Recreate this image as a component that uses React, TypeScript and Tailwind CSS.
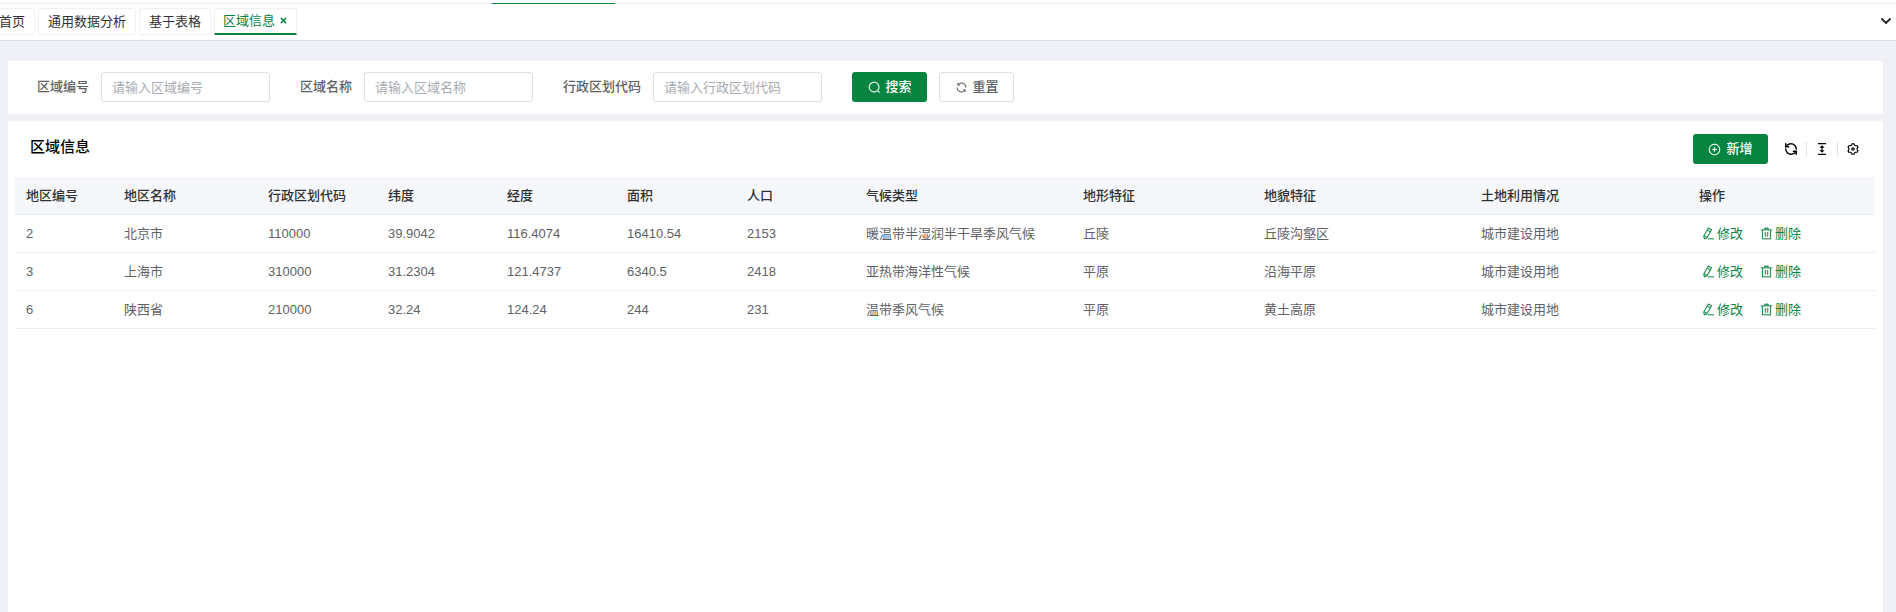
import { ChevronDown, RefreshCcw, X } from "lucide-react";
import { RiSettings3Line } from "react-icons/ri";

const PATHS = {
  search: [
    "m795.904 750.72 124.992 124.928a32 32 0 0 1-45.248 45.248L750.656 795.904a416 416 0 1 1 45.248-45.248zM480 832a352 352 0 1 0 0-704 352 352 0 0 0 0 704",
  ],
  refresh: [
    "M771.776 794.88A384 384 0 0 1 128 512h64a320 320 0 0 0 555.712 216.448H654.72a32 32 0 1 1 0-64h149.056a32 32 0 0 1 32 32v148.928a32 32 0 1 1-64 0v-50.56zM276.288 295.616h92.992a32 32 0 0 1 0 64H220.16a32 32 0 0 1-32-32V178.56a32 32 0 0 1 64 0v50.56A384 384 0 0 1 896.128 512h-64a320 320 0 0 0-555.776-216.384z",
  ],
  plus: [
    "M352 480h320a32 32 0 1 1 0 64H352a32 32 0 0 1 0-64",
    "M480 672V352a32 32 0 1 1 64 0v320a32 32 0 0 1-64 0",
    "M512 896a384 384 0 1 0 0-768 384 384 0 0 0 0 768m0 64a448 448 0 1 1 0-896 448 448 0 0 1 0 896",
  ],
  remove: [
    "M160 256H96a32 32 0 0 1 0-64h256V95.936a32 32 0 0 1 32-32h256a32 32 0 0 1 32 32V192h256a32 32 0 1 1 0 64h-64v672a32 32 0 0 1-32 32H192a32 32 0 0 1-32-32zm448-64v-64H416v64zM224 896h576V256H224zm192-128a32 32 0 0 1-32-32V416a32 32 0 0 1 64 0v320a32 32 0 0 1-32 32m192 0a32 32 0 0 1-32-32V416a32 32 0 0 1 64 0v320a32 32 0 0 1-32 32",
  ],
  edit: [
    "m199.04 672.64 193.984 112 224-387.968-193.92-112-224 388.032zm-23.872 60.16 32.896 148.288 144.896-45.696zM455.04 229.248l193.92 112 56.704-98.112-193.984-112zM104.32 708.8l384-665.024 304.768 175.936L409.152 884.8h.064l-248.448 78.336zm384 254.272v-64h448v64z",
  ],
};

function Icon({ name }: { name: keyof typeof PATHS }) {
  return (
    <svg
      viewBox="0 0 1024 1024"
      className="size-[13px] shrink-0"
      fill="currentColor"
      stroke="currentColor"
      strokeWidth="16"
      aria-hidden="true"
    >
      {PATHS[name].map((d) => (
        <path key={d} d={d} />
      ))}
    </svg>
  );
}

function DensityIcon() {
  return (
    <svg viewBox="0 0 14 14" className="size-[14px]" fill="currentColor" aria-hidden="true">
      <path d="M3 1h8v1.300H3zM3 11.700h8V13H3zM7 3.300l2.600 2.500H7.600v2.400h2L7 10.700 4.400 8.200h2V5.800h-2z" />
    </svg>
  );
}

const TABS = ["首页", "通用数据分析", "基于表格"];

const FIELDS = [
  { id: "code", label: "区域编号" },
  { id: "name", label: "区域名称" },
  { id: "division", label: "行政区划代码" },
];

const COLUMNS = [
  { title: "地区编号", width: "w-[98px]" },
  { title: "地区名称", width: "w-[144px]" },
  { title: "行政区划代码", width: "w-[120px]" },
  { title: "纬度", width: "w-[119px]" },
  { title: "经度", width: "w-[120px]" },
  { title: "面积", width: "w-[120px]" },
  { title: "人口", width: "w-[119px]" },
  { title: "气候类型", width: "w-[217px]" },
  { title: "地形特征", width: "w-[181px]" },
  { title: "地貌特征", width: "w-[217px]" },
  { title: "土地利用情况", width: "w-[218px]" },
  { title: "操作", width: "w-[187px]" },
];

const ROWS = [
  ["2", "北京市", "110000", "39.9042", "116.4074", "16410.54", "2153", "暖温带半湿润半干旱季风气候", "丘陵", "丘陵沟壑区", "城市建设用地"],
  ["3", "上海市", "310000", "31.2304", "121.4737", "6340.5", "2418", "亚热带海洋性气候", "平原", "沿海平原", "城市建设用地"],
  ["6", "陕西省", "210000", "32.24", "124.24", "244", "231", "温带季风气候", "平原", "黄土高原", "城市建设用地"],
];

function TabBar() {
  return (
    <header className="border-b border-[#dcdfe6] bg-white">
      <div className="flex h-1 items-end border-b border-[#ebebeb]">
        <div className="-mb-px ml-[492px] h-px w-[123px] bg-[#07843f]" />
      </div>
      <nav className="flex h-9 items-center justify-between pr-[2px] pb-[2px]">
        <div className="-ml-[11px] flex gap-[3px] text-[13px] leading-[25px] text-[#303133]">
          {TABS.map((tab) => (
            <a key={tab} href="#" className="rounded-[3px] border border-[#f0f0f0] px-[9px]">
              {tab}
            </a>
          ))}
          <div className="flex items-center gap-1 rounded-t-[3px] border border-b-2 border-[#f0f0f0] border-b-[#07843f] px-2 leading-6 text-[#07843f]">
            <a href="#" aria-current="page">区域信息</a>
            <button type="button" aria-label="关闭">
              <X className="size-[9px]" strokeWidth={4} />
            </button>
          </div>
        </div>
        <button type="button" aria-label="更多标签" className="text-[#303133]">
          <ChevronDown className="size-4" strokeWidth={3} />
        </button>
      </nav>
    </header>
  );
}

function SearchForm() {
  return (
    <form className="flex items-center gap-[30px] bg-white px-[29px] pt-[11px] pb-3" onSubmit={(e) => e.preventDefault()}>
      {FIELDS.map(({ id, label }) => (
        <div key={id} className="flex items-center gap-3">
          <label htmlFor={id} className="font-medium text-[#606266]">{label}</label>
          <input
            id={id}
            placeholder={"请输入" + label}
            className="h-[30px] w-[169px] rounded-[3px] border border-[#dcdfe6] px-[10px] outline-none placeholder:text-[#a8abb2]"
          />
        </div>
      ))}
      <div className="flex gap-3">
        <button type="submit" className="flex h-[30px] w-[75px] items-center justify-center gap-[5px] rounded-[3px] bg-[#07843f] font-medium text-white">
          <Icon name="search" />
          搜索
        </button>
        <button type="reset" className="flex h-[30px] w-[75px] items-center justify-center gap-[5px] rounded-[3px] border border-[#dcdfe6] font-medium text-[#606266]">
          <Icon name="refresh" />
          重置
        </button>
      </div>
    </form>
  );
}

function Toolbar() {
  return (
    <div className="flex items-center text-black">
      <button type="button" className="mr-4 flex h-[30px] w-[75px] items-center justify-center gap-[5px] rounded-[3px] bg-[#07843f] font-medium text-white">
        <Icon name="plus" />
        新增
      </button>
      <div className="flex h-[14px] divide-x divide-[#dcdfe6]">
        <button type="button" aria-label="刷新" className="pr-2">
          <RefreshCcw className="size-[14px]" strokeWidth={2.5} />
        </button>
        <button type="button" aria-label="密度" className="px-2">
          <DensityIcon />
        </button>
        <button type="button" aria-label="列设置" className="pl-2">
          <RiSettings3Line className="size-[14px]" />
        </button>
      </div>
    </div>
  );
}

function RegionTable() {
  return (
    <table className="w-full table-fixed border-separate border-spacing-0 text-left">
      <thead>
        <tr className="h-[38px] bg-[#f5f7fa]">
          {COLUMNS.map(({ title, width }) => (
            <th key={title} className={`${width} border-b border-[#ebeef5] px-[11px] font-medium text-[#303133]`}>
              {title}
            </th>
          ))}
        </tr>
      </thead>
      <tbody className="text-[#606266]">
        {ROWS.map((row) => (
          <tr key={row[0]} className="h-[38px]">
            {row.map((cell, i) => (
              <td key={i} className="border-b border-[#ebeef5] px-[11px]">{cell}</td>
            ))}
            <td className="border-b border-[#ebeef5] px-[14px] text-[#07843f]">
              <div className="flex items-center gap-[17px]">
                <button type="button" className="flex items-center gap-[2px]">
                  <Icon name="edit" />
                  修改
                </button>
                <button type="button" className="flex items-center gap-[2px]">
                  <Icon name="remove" />
                  删除
                </button>
              </div>
            </td>
          </tr>
        ))}
      </tbody>
    </table>
  );
}

export default function App() {
  return (
    <div className="flex min-h-screen flex-col bg-[#f0f1f6] font-['Liberation_Sans','Noto_Sans_CJK_SC',sans-serif] text-[13px] leading-5">
      <TabBar />
      <main className="flex grow flex-col gap-[7px] pt-5 pr-[13px] pl-2">
        <SearchForm />
        <section className="grow bg-white pt-[13px] pr-2 pl-[7px]">
          <div className="mb-[13px] flex items-center justify-between pr-[15px] pl-[15px]">
            <h1 className="pb-1 text-[15px] font-medium text-black">区域信息</h1>
            <Toolbar />
          </div>
          <RegionTable />
        </section>
      </main>
    </div>
  );
}
